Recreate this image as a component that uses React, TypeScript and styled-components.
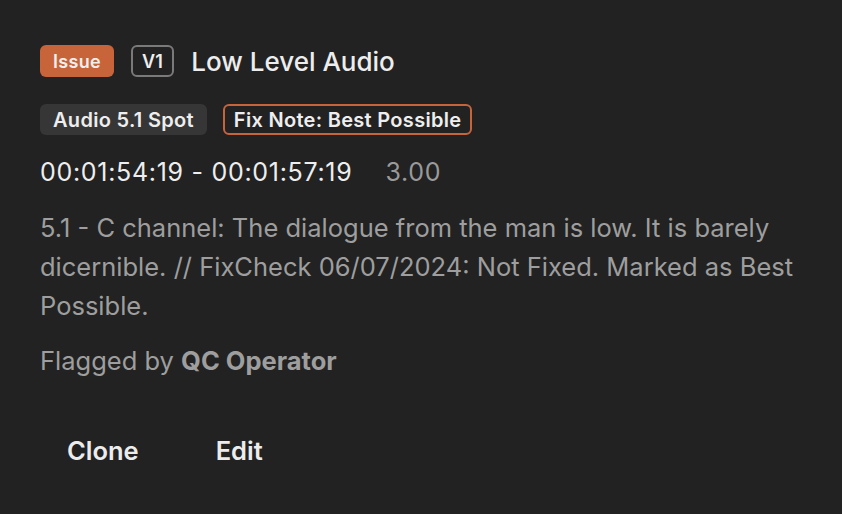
import styled, { createGlobalStyle } from 'styled-components'

const GlobalStyle = createGlobalStyle`
  html, body {
    margin: 0;
    padding: 0;
    background: #222222;
  }
  body {
    font-family: Inter, "Noto Sans", sans-serif;
    -webkit-font-smoothing: antialiased;
  }
`

const Card = styled.div`
  width: 842px;
  height: 514px;
  box-sizing: border-box;
  padding: 45px 40px 0 40px;
  background: #222222;
  display: flex;
  flex-direction: column;
`

const TitleRow = styled.div`
  display: flex;
  align-items: center;
  gap: 17px;
  height: 32px;
`

type Tone = 'issue' | 'outline' | 'muted' | 'accent'

const Badge = styled.span<{ $tone: Tone }>`
  display: inline-flex;
  align-items: center;
  justify-content: center;
  box-sizing: border-box;
  height: ${({ $tone }) => ($tone === 'issue' || $tone === 'outline' ? '32px' : '31px')};
  padding: 0 ${({ $tone }) => ($tone === 'outline' || $tone === 'accent' ? '9px' : '11px')};
  border-radius: 6px;
  font-size: ${({ $tone }) => ($tone === 'issue' || $tone === 'outline' ? '18px' : '20px')};
  font-weight: 600;
  letter-spacing: 0.3px;
  color: #eeeeee;
  background: ${({ $tone }) =>
    $tone === 'issue' ? '#c8643a' : $tone === 'muted' ? '#363636' : 'transparent'};
  border: 2px solid
    ${({ $tone }) =>
      $tone === 'outline' ? '#7a7a7a' : $tone === 'accent' ? '#c8643a' : 'transparent'};
`

const Title = styled.h1`
  margin: 0;
  font-size: 26px;
  font-weight: 500;
  color: #ededed;
`

const TagRow = styled.div`
  display: flex;
  gap: 16px;
  margin-top: 27px;
`

const TimeRow = styled.div`
  display: flex;
  align-items: baseline;
  gap: 33px;
  margin-top: 22px;
  height: 30px;
  line-height: 30px;
  font-size: 25px;
  letter-spacing: 0.7px;
  color: #eeeeee;
`

const Duration = styled.span`
  color: #9a9a9a;
`

const Description = styled.p`
  margin: 21px 0 0 0;
  font-size: 25.5px;
  line-height: 39px;
  color: #9e9e9e;
  max-width: 770px;
`

const Flagged = styled.p`
  margin: 21px 0 0 0;
  font-size: 25.5px;
  line-height: 30px;
  color: #9e9e9e;

  strong {
    font-weight: 700;
  }
`

const Actions = styled.div`
  display: flex;
  gap: 23px;
  margin-top: 54px;
`

const ActionButton = styled.button`
  background: transparent;
  border: none;
  padding: 6px 27px;
  line-height: 30px;
  font-family: Inter, "Noto Sans", sans-serif;
  font-size: 25.5px;
  font-weight: 600;
  color: #ececec;
  cursor: pointer;
`

export default function App() {
  return (
    <>
      <GlobalStyle />
      <Card>
        <TitleRow>
          <Badge $tone="issue">Issue</Badge>
          <Badge $tone="outline">V1</Badge>
          <Title>Low Level Audio</Title>
        </TitleRow>
        <TagRow>
          <Badge $tone="muted">Audio 5.1 Spot</Badge>
          <Badge $tone="accent">Fix Note: Best Possible</Badge>
        </TagRow>
        <TimeRow>
          <span>00:01:54:19 - 00:01:57:19</span>
          <Duration>3.00</Duration>
        </TimeRow>
        <Description>
          5.1 - C channel: The dialogue from the man is low. It is barely dicernible. //
          FixCheck 06/07/2024: Not Fixed. Marked as Best Possible.
        </Description>
        <Flagged>
          Flagged by <strong>QC Operator</strong>
        </Flagged>
        <Actions>
          <ActionButton type="button">Clone</ActionButton>
          <ActionButton type="button">Edit</ActionButton>
        </Actions>
      </Card>
    </>
  )
}
